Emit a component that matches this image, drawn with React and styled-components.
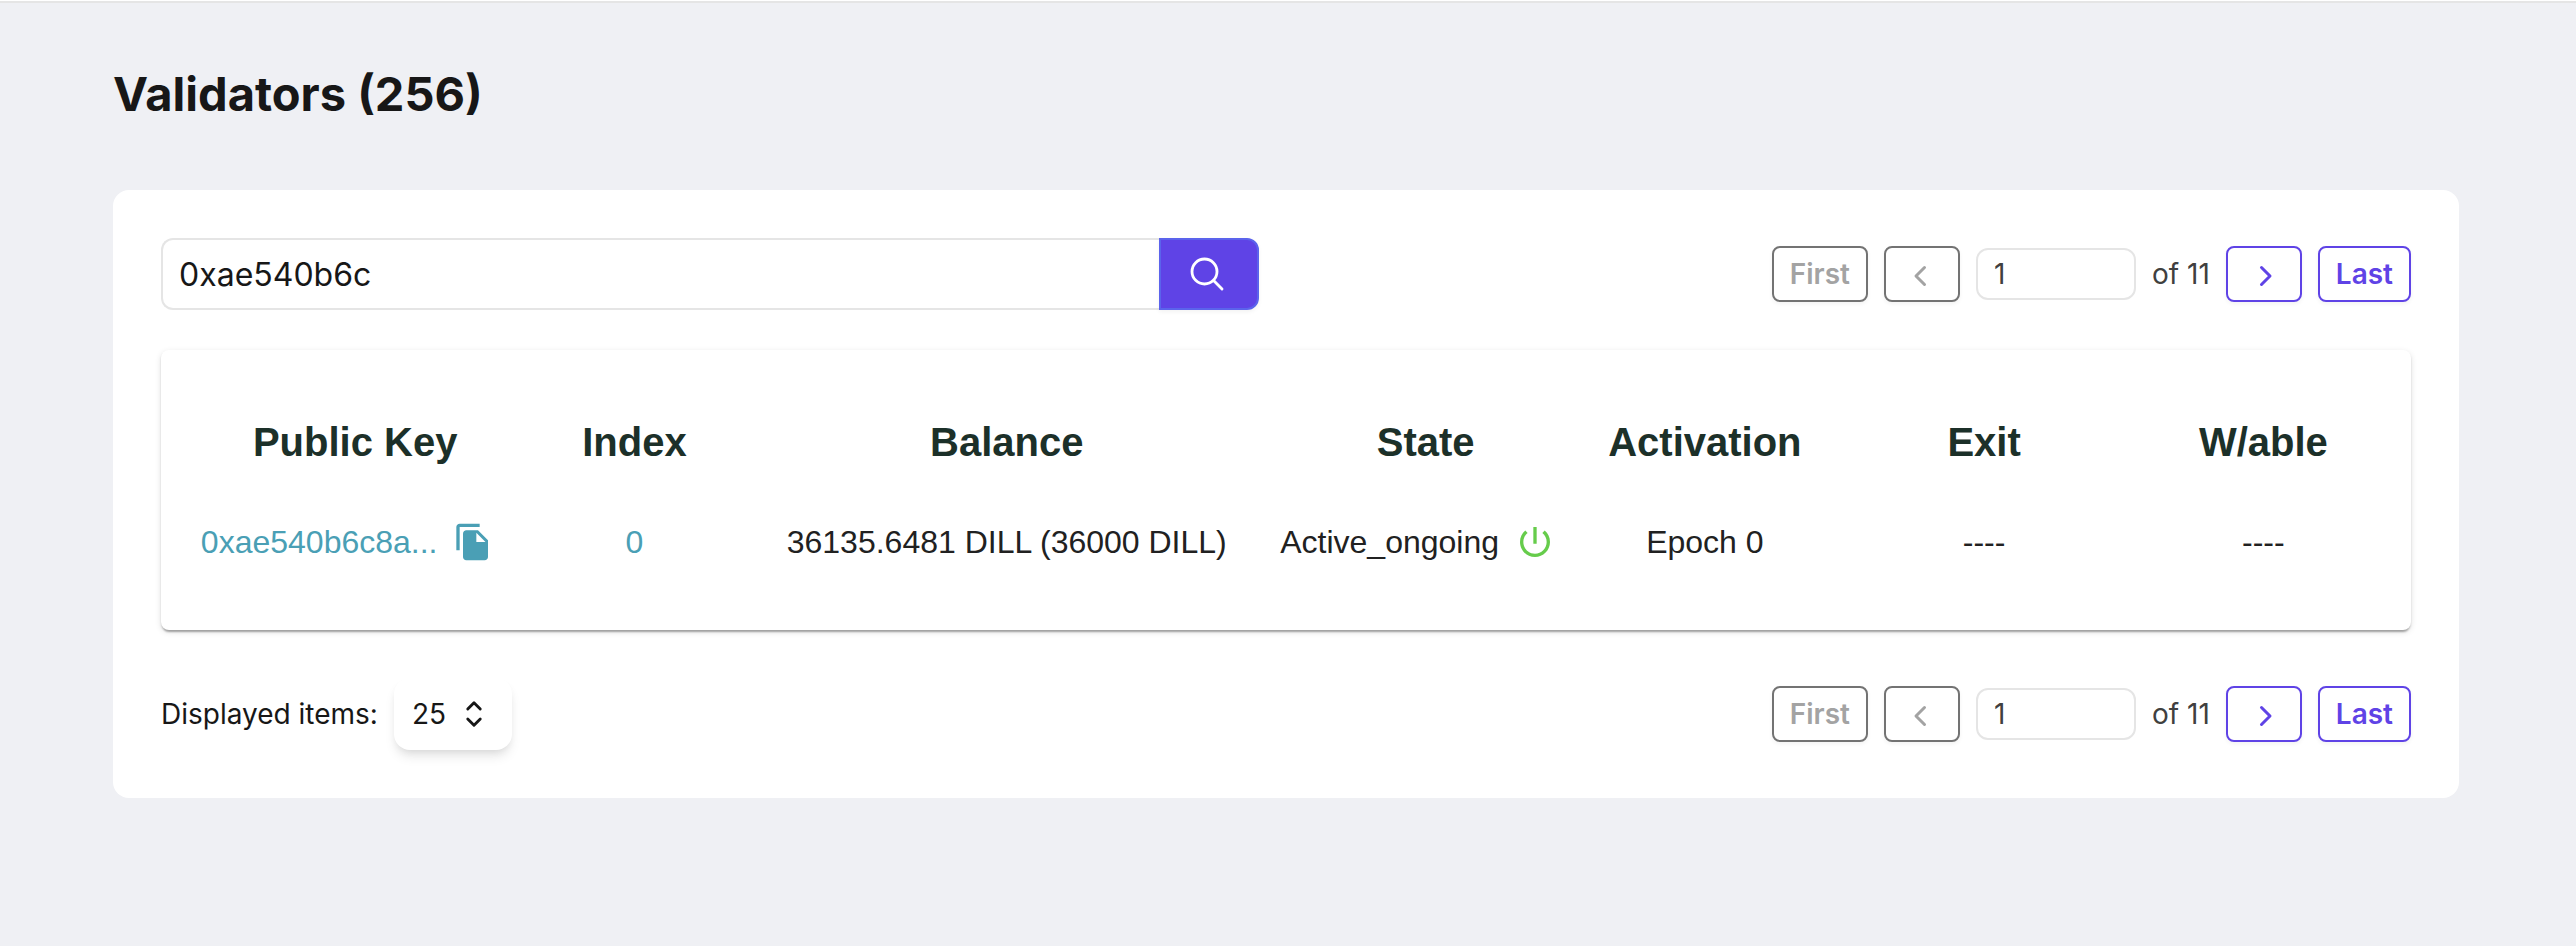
import React, { useState } from "react";
import styled, { createGlobalStyle } from "styled-components";

const GlobalStyle = createGlobalStyle`
  *, *::before, *::after { box-sizing: border-box; }
  body {
    margin: 0;
    background: #eff0f4;
    color: #171717;
    font-family: Inter, "Liberation Sans", sans-serif;
  }
  button, input, select { font: inherit; margin: 0; }
`;

const Page = styled.div`
  border-top: 1px solid #ffffff;
`;

const Main = styled.main`
  border-top: 2px solid #e5e5e5;
  padding: 61px 117px 48px 113px;
`;

const Title = styled.h1`
  margin: 0 0 66px;
  font-size: 47px;
  line-height: 60px;
  font-weight: 700;
`;

const Card = styled.section`
  background: #ffffff;
  border-radius: 16px;
  padding: 48px;
`;

const Bar = styled.div`
  display: flex;
  align-items: center;
  justify-content: space-between;
  height: 72px;
`;

const SearchForm = styled.form`
  display: flex;
  height: 72px;
  flex: 0 1 1098px;
`;

const SearchInput = styled.input`
  flex: 1;
  min-width: 0;
  padding: 0 16px;
  border: 2px solid #e5e5e5;
  border-right: 0;
  border-radius: 12px 0 0 12px;
  background: #ffffff;
  color: #171717;
  font-size: 32px;
  outline: none;
`;

const SearchButton = styled.button`
  display: flex;
  align-items: center;
  padding: 0 30px 0 26px;
  border: 2px solid #5b63ec;
  border-radius: 0 12px 12px 0;
  background: #5f43e6;
  color: #ffffff;
  box-shadow: 0 2px 4px rgba(0, 0, 0, 0.05);
`;

const Pager = styled.nav`
  display: flex;
  align-items: center;
  gap: 16px;
  font-size: 28px;
  line-height: 40px;
  color: #404040;
`;

const PagerButton = styled.button`
  display: flex;
  align-items: center;
  height: 56px;
  padding: 0 16px;
  border: 2px solid #5f43e6;
  border-radius: 8px;
  background: #ffffff;
  color: #5f43e6;
  font-weight: 600;
  box-shadow: 0 2px 4px rgba(0, 0, 0, 0.05);

  &:disabled {
    border-color: #737373;
    color: #a3a3a3;
  }
`;

const PageInput = styled.input`
  width: 160px;
  height: 52px;
  padding: 0 16px;
  border: 2px solid #e5e5e5;
  border-radius: 12px;
  background: #ffffff;
  color: #404040;
  outline: none;
`;

const Panel = styled.div`
  margin: 40px 0 48px;
  padding: 42px 8px 38px;
  border-radius: 8px;
  background: #ffffff;
  box-shadow:
    0 4px 2px -2px rgba(0, 0, 0, 0.2),
    0 2px 2px 0 rgba(0, 0, 0, 0.14),
    0 2px 6px 0 rgba(0, 0, 0, 0.12);
`;

const Table = styled.table`
  width: 100%;
  table-layout: fixed;
  border-collapse: collapse;
  font-family: "Liberation Sans", Arial, sans-serif;
`;

const Column = styled.col`
  width: ${({ $share }) => $share}%;
`;

const HeadCell = styled.th`
  height: 100px;
  padding: 0;
  color: #1c3029;
  font-size: 40px;
  font-weight: 700;
  white-space: nowrap;
`;

const Cell = styled.td`
  height: 100px;
  padding: 0;
  color: #212121;
  font-size: 32px;
  text-align: center;
  white-space: nowrap;
`;

const CellContent = styled.div`
  display: flex;
  align-items: center;
  justify-content: center;
`;

const CellLink = styled.a`
  color: #4a9fb5;
  text-decoration: none;
`;

const IconButton = styled.button`
  display: flex;
  padding: 16px;
  border: 0;
  background: none;
  color: ${({ $tone }) => $tone};
`;

const ItemsLabel = styled.label`
  display: flex;
  align-items: center;
  gap: 16px;
  font-size: 28px;
`;

const SelectWrap = styled.span`
  position: relative;
  display: flex;
`;

const Select = styled.select`
  appearance: none;
  width: 118px;
  height: 72px;
  padding: 0 18px;
  border: 0;
  border-radius: 16px;
  background: #ffffff;
  color: #171717;
  box-shadow:
    0 8px 12px -2px rgba(0, 0, 0, 0.1),
    0 4px 8px -4px rgba(0, 0, 0, 0.1);
`;

const SelectIcon = styled.span`
  position: absolute;
  top: 16px;
  right: 18px;
  display: flex;
  pointer-events: none;
`;

function StrokeIcon({ d, box = 24, stroke = 1.7 }) {
  return (
    <svg width="40" height="40" viewBox={`0 0 ${box} ${box}`} fill="none" stroke="currentColor" strokeWidth={stroke} strokeLinecap="round" strokeLinejoin="round" aria-hidden="true">
      <path d={d} />
    </svg>
  );
}

function FillIcon({ d }) {
  return (
    <svg width="40" height="40" viewBox="0 0 24 24" fill="currentColor" aria-hidden="true">
      <path d={d} />
    </svg>
  );
}

const icons = {
  search: "m21 21-5.197-5.197m0 0A7.5 7.5 0 1 0 5.196 5.196a7.5 7.5 0 0 0 10.607 10.607Z",
  left: "M22.5 13.5 14 22l8.5 8.5",
  right: "M17.5 13.5 26 22l-8.5 8.5",
  upDown: "M8.25 15 12 18.75 15.75 15m-7.5-6L12 5.25 15.75 9",
  copy: "M16 1H4c-1.1 0-2 .9-2 2v14h2V3h12V1zm-1 4l6 6v10c0 1.1-.9 2-2 2H7.99C6.89 23 6 22.1 6 21l.01-14c0-1.1.89-2 1.99-2h7zm-1 7h5.5L14 6.5V12z",
  power: "M13 3h-2v10h2V3zm4.83 2.17l-1.42 1.42C17.99 7.86 19 9.81 19 12c0 3.87-3.13 7-7 7s-7-3.13-7-7c0-2.19 1.01-4.14 2.58-5.42L6.17 5.17C4.23 6.82 3 9.26 3 12c0 4.97 4.03 9 9 9s9-4.03 9-9c0-2.74-1.23-5.18-3.17-6.83z",
};

const columns = [
  { name: "Public Key", share: 16.6667 },
  { name: "Index", share: 8.3333 },
  { name: "Balance", share: 25 },
  { name: "State", share: 12.5 },
  { name: "Activation", share: 12.5 },
  { name: "Exit", share: 12.5 },
  { name: "W/able", share: 12.5 },
];

function Pagination({ page, onPage }) {
  return (
    <Pager aria-label="Pagination">
      <PagerButton type="button" disabled>First</PagerButton>
      <PagerButton type="button" disabled aria-label="Previous page">
        <StrokeIcon d={icons.left} box={40} stroke={3} />
      </PagerButton>
      <PageInput aria-label="Page" value={page} onChange={(e) => onPage(e.target.value)} />
      <span>of 11</span>
      <PagerButton type="button" aria-label="Next page">
        <StrokeIcon d={icons.right} box={40} stroke={3} />
      </PagerButton>
      <PagerButton type="button">Last</PagerButton>
    </Pager>
  );
}

export default function App() {
  const [query, setQuery] = useState("0xae540b6c");
  const [page, setPage] = useState("1");
  const [size, setSize] = useState("25");

  return (
    <Page>
      <GlobalStyle />
      <Main>
        <Title>Validators (256)</Title>
        <Card>
          <Bar>
            <SearchForm role="search" onSubmit={(e) => e.preventDefault()}>
              <SearchInput aria-label="Search validators" value={query} onChange={(e) => setQuery(e.target.value)} />
              <SearchButton type="submit" aria-label="Search">
                <StrokeIcon d={icons.search} />
              </SearchButton>
            </SearchForm>
            <Pagination page={page} onPage={setPage} />
          </Bar>
          <Panel>
            <Table>
              <colgroup>
                {columns.map((c) => <Column key={c.name} $share={c.share} />)}
              </colgroup>
              <thead>
                <tr>
                  {columns.map((c) => <HeadCell key={c.name} scope="col">{c.name}</HeadCell>)}
                </tr>
              </thead>
              <tbody>
                <tr>
                  <Cell>
                    <CellContent>
                      <CellLink href="#validator">0xae540b6c8a...</CellLink>
                      <IconButton type="button" $tone="#4a9fb5" aria-label="Copy public key">
                        <FillIcon d={icons.copy} />
                      </IconButton>
                    </CellContent>
                  </Cell>
                  <Cell><CellLink href="#validator">0</CellLink></Cell>
                  <Cell>36135.6481 DILL (36000 DILL)</Cell>
                  <Cell>
                    <CellContent>
                      Active_ongoing
                      <IconButton type="button" $tone="#66cc4b" aria-label="Online">
                        <FillIcon d={icons.power} />
                      </IconButton>
                    </CellContent>
                  </Cell>
                  <Cell>Epoch 0</Cell>
                  <Cell>----</Cell>
                  <Cell>----</Cell>
                </tr>
              </tbody>
            </Table>
          </Panel>
          <Bar>
            <ItemsLabel>
              Displayed items:
              <SelectWrap>
                <Select value={size} onChange={(e) => setSize(e.target.value)}>
                  <option>10</option>
                  <option>25</option>
                  <option>50</option>
                </Select>
                <SelectIcon><StrokeIcon d={icons.upDown} /></SelectIcon>
              </SelectWrap>
            </ItemsLabel>
            <Pagination page={page} onPage={setPage} />
          </Bar>
        </Card>
      </Main>
    </Page>
  );
}
